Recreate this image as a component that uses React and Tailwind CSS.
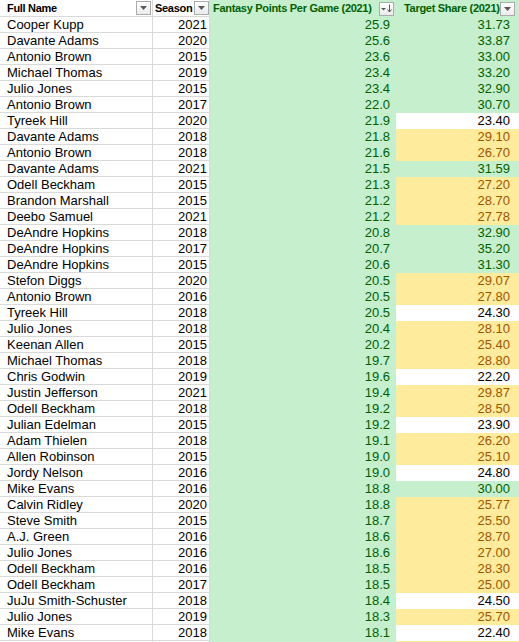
import React from 'react';

const rows = [
  ['Cooper Kupp', 2021, 25.9, 31.73],
  ['Davante Adams', 2020, 25.6, 33.87],
  ['Antonio Brown', 2015, 23.6, 33.0],
  ['Michael Thomas', 2019, 23.4, 33.2],
  ['Julio Jones', 2015, 23.4, 32.9],
  ['Antonio Brown', 2017, 22.0, 30.7],
  ['Tyreek Hill', 2020, 21.9, 23.4],
  ['Davante Adams', 2018, 21.8, 29.1],
  ['Antonio Brown', 2018, 21.6, 26.7],
  ['Davante Adams', 2021, 21.5, 31.59],
  ['Odell Beckham', 2015, 21.3, 27.2],
  ['Brandon Marshall', 2015, 21.2, 28.7],
  ['Deebo Samuel', 2021, 21.2, 27.78],
  ['DeAndre Hopkins', 2018, 20.8, 32.9],
  ['DeAndre Hopkins', 2017, 20.7, 35.2],
  ['DeAndre Hopkins', 2015, 20.6, 31.3],
  ['Stefon Diggs', 2020, 20.5, 29.07],
  ['Antonio Brown', 2016, 20.5, 27.8],
  ['Tyreek Hill', 2018, 20.5, 24.3],
  ['Julio Jones', 2018, 20.4, 28.1],
  ['Keenan Allen', 2015, 20.2, 25.4],
  ['Michael Thomas', 2018, 19.7, 28.8],
  ['Chris Godwin', 2019, 19.6, 22.2],
  ['Justin Jefferson', 2021, 19.4, 29.87],
  ['Odell Beckham', 2018, 19.2, 28.5],
  ['Julian Edelman', 2015, 19.2, 23.9],
  ['Adam Thielen', 2018, 19.1, 26.2],
  ['Allen Robinson', 2015, 19.0, 25.1],
  ['Jordy Nelson', 2016, 19.0, 24.8],
  ['Mike Evans', 2016, 18.8, 30.0],
  ['Calvin Ridley', 2020, 18.8, 25.77],
  ['Steve Smith', 2015, 18.7, 25.5],
  ['A.J. Green', 2016, 18.6, 28.7],
  ['Julio Jones', 2016, 18.6, 27.0],
  ['Odell Beckham', 2016, 18.5, 28.3],
  ['Odell Beckham', 2017, 18.5, 25.0],
  ['JuJu Smith-Schuster', 2018, 18.4, 24.5],
  ['Julio Jones', 2019, 18.3, 25.7],
  ['Mike Evans', 2018, 18.1, 22.4],
];

const FilterButton = () => (
  <div className="w-[15px] h-[14px] shrink-0 border border-[#acacac] bg-linear-to-b from-white to-[#ebebeb] flex items-center justify-center">
    <svg width="7" height="4" viewBox="0 0 7 4">
      <path d="M0 0H7L3.5 4Z" fill="#5a5a5a" />
    </svg>
  </div>
);

const SortButton = () => (
  <div className="w-[15px] h-[14px] shrink-0 border border-[#acacac] bg-linear-to-b from-white to-[#ebebeb] flex items-center justify-center">
    <svg width="11" height="9" viewBox="0 0 11 9">
      <path d="M0 4H5L2.5 6.5Z" fill="#5a5a5a" />
      <path d="M8.5 0.5V8" stroke="#5a5a5a" strokeWidth="1" />
      <path d="M6.5 5.5L8.5 8L10.5 5.5" stroke="#5a5a5a" strokeWidth="1" fill="none" />
    </svg>
  </div>
);

const targetClass = (v) =>
  v >= 30
    ? 'bg-[#c6efce] text-[#006100]'
    : v >= 25
    ? 'bg-[#ffeb9c] text-[#9c5700]'
    : 'bg-white text-black';

const Row = ({ name, season, fpg, ts }) => (
  <div className="flex h-[16px] leading-[15px]">
    <div className="w-[153px] shrink-0 border-r border-b border-[#d9d9d9] pl-[7px] whitespace-nowrap">
      {name}
    </div>
    <div className="w-[57px] shrink-0 border-r border-b border-[#d9d9d9] pr-[2px] text-right">
      {season}
    </div>
    <div className="w-[186px] shrink-0 bg-[#c6efce] text-[#006100] pr-[6px] text-right">
      {fpg.toFixed(1)}
    </div>
    <div className={`w-[123px] shrink-0 pr-[9px] text-right ${targetClass(ts)}`}>
      {ts.toFixed(2)}
    </div>
  </div>
);

export default function App() {
  return (
    <div className="w-[519px] h-[642px] overflow-hidden bg-white text-black text-[13px] font-['Liberation_Sans',Arial,sans-serif]">
      {/* header row */}
      <div className="flex h-[17px] text-[11px] font-bold tracking-[-0.3px]">
        <div className="w-[153px] shrink-0 border-r border-b border-[#d9d9d9] pl-[7px] pr-[1px] flex items-center justify-between">
          <span>Full Name</span>
          <FilterButton />
        </div>
        <div className="w-[57px] shrink-0 border-r border-b border-[#d9d9d9] pl-[2px] flex items-center justify-between">
          <span>Season</span>
          <FilterButton />
        </div>
        <div className="w-[186px] shrink-0 bg-[#c6efce] text-[#006100] pl-[3px] pr-[2px] flex items-center justify-between">
          <span className="whitespace-nowrap">Fantasy Points Per Game (2021)</span>
          <SortButton />
        </div>
        <div className="w-[123px] shrink-0 bg-[#c6efce] text-[#006100] pl-[8px] pr-[5px] flex items-center justify-between">
          <span className="whitespace-nowrap">Target Share (2021)</span>
          <FilterButton />
        </div>
      </div>
      {rows.map(([name, season, fpg, ts], i) => (
        <Row key={i} name={name} season={season} fpg={fpg} ts={ts} />
      ))}
      {/* next row, only its fills peek in at the bottom edge */}
      <div className="flex h-[16px]">
        <div className="w-[153px] shrink-0 border-r border-[#d9d9d9]" />
        <div className="w-[57px] shrink-0 border-r border-[#d9d9d9]" />
        <div className="w-[186px] shrink-0 bg-[#c6efce]" />
        <div className="w-[123px] shrink-0 bg-[#ffeb9c]" />
      </div>
    </div>
  );
}
